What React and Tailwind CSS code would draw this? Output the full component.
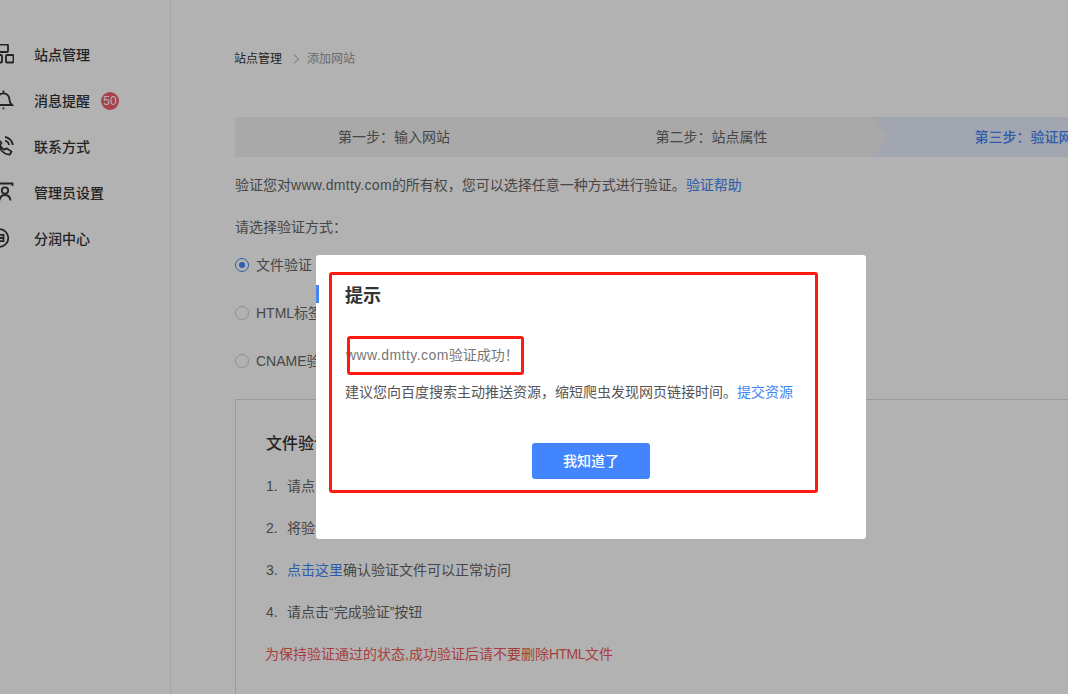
import React from 'react';

const fontStack = "font-['Liberation_Sans','Noto_Sans_CJK_SC',sans-serif]";

// Sidebar icons are cut off by the left edge of the window, as in the screenshot
const SiteIcon = () => (
  <svg viewBox="0 0 20 20" className="w-5 h-5 -translate-y-px" fill="none" stroke="#333" strokeWidth="1.8">
    <rect x="4.5" y="0.5" width="9.5" height="7.5" rx="1" />
    <rect x="-1" y="11" width="9" height="7.5" rx="1" />
    <rect x="12" y="11" width="7.5" height="7.5" rx="1" />
  </svg>
);

const BellIcon = () => (
  <svg viewBox="0 0 20 20" className="w-5 h-5 -translate-y-px" fill="none" stroke="#333" strokeWidth="1.8">
    <path d="M1 15h17c-1.600-1.400-2.600-2.600-2.600-5.500 0-3.400-2.400-6.200-5.900-6.200S3.600 6.100 3.600 9.500c0 2.900-1 4.100-2.600 5.500z" />
    <path d="M9.500 0.500v2.800M9.500 17.500v1.800" />
  </svg>
);

const PhoneIcon = () => (
  <svg viewBox="0 0 20 20" className="w-5 h-5 -translate-y-px" fill="none" stroke="#333" strokeWidth="1.8">
    <path d="M3.500 2.500 7.500 7 6 9c.8 2 2.500 3.800 4.500 4.800l2-1.500 5 3.200-1.500 3c-6 .4-13-6.500-12.500-15.500z" />
    <path d="M11 1c4 .5 7.300 3.800 7.800 8M11 4.800c2 .3 3.700 2 4 4.200" />
  </svg>
);

const AdminIcon = () => (
  <svg viewBox="0 0 20 20" className="w-5 h-5 -translate-y-px" fill="none" stroke="#333" strokeWidth="1.8">
    <path d="M1 1.500h17.500v2.500M1 1.500v3M1 9v3" />
    <circle cx="11" cy="8.500" r="3.200" />
    <path d="M5.500 18.500c.4-3.500 2.500-5.500 5.500-5.500s5.100 2 5.500 5.500" />
  </svg>
);

const ShareIcon = () => (
  <svg viewBox="0 0 20 20" className="w-5 h-5 -translate-y-px" fill="none" stroke="#333" strokeWidth="1.8">
    <circle cx="5.500" cy="10" r="8.800" />
    <path d="M1 6.800h8.500v6.400H1M1 10h8.500" />
  </svg>
);

const NavItem = ({ icon: Icon, label, badge }) => (
  <li className="flex items-center h-[46px] -ml-[6px] gap-5">
    <Icon />
    <span className="text-[14px] font-medium text-[#333]">{label}</span>
    {badge && (
      <span className="ml-[-9px] w-[18px] h-[18px] rounded-full bg-[#f05f69] text-white text-[12px] leading-[18px] text-center">
        {badge}
      </span>
    )}
  </li>
);

const Sidebar = () => (
  <aside className="w-[171px] shrink-0 border-r border-[#eeeeee] overflow-hidden pt-8">
    <ul>
      <NavItem icon={SiteIcon} label="站点管理" />
      <NavItem icon={BellIcon} label="消息提醒" badge="50" />
      <NavItem icon={PhoneIcon} label="联系方式" />
      <NavItem icon={AdminIcon} label="管理员设置" />
      <NavItem icon={ShareIcon} label="分润中心" />
    </ul>
  </aside>
);

const Radio = ({ checked, label }) => (
  <div className="flex items-center h-[48px] gap-[7px] text-[14px] text-[#666]">
    <span className={`w-[14px] h-[14px] rounded-full border flex items-center justify-center ${checked ? 'border-[#4285f4]' : 'border-[#d0d0d0]'}`}>
      {checked && <span className="w-[6px] h-[6px] rounded-full bg-[#4285f4]" />}
    </span>
    {label}
  </div>
);

const StepRow = () => (
  <div className="relative flex w-[960px] h-10 bg-[#f2f2f2] text-[14px] text-[#666] mt-[48px]">
    <div className="w-[318px] flex items-center justify-center">第一步：输入网站</div>
    <div className="w-[319px] flex items-center justify-center pr-[2px]">第二步：站点属性</div>
    <div className="w-[323px] flex items-center justify-center pr-[6px] font-medium text-[#4285f4] bg-[#e8eefc] [clip-path:polygon(0_0,100%_0,100%_100%,0_100%,16px_50%)]">
      第三步：验证网站
    </div>
    {/* faint chevron between the first two steps */}
    <svg className="absolute left-[318px] top-0 w-5 h-10" viewBox="0 0 20 40" fill="none" stroke="#f9f9f9" strokeWidth="1">
      <path d="M0 0l16 20L0 40" />
    </svg>
  </div>
);

const Steps = () => (
  <div className="text-[14px] text-[#666] leading-[20px] mt-[32px] pl-[30px] pr-10">
    <h3 className="text-[16px] font-medium text-[#333] leading-6">文件验证</h3>
    <ol className="mt-[9px]">
      <li className="h-[42px] flex items-center"><span className="w-[21px]">1.</span>请点击下载验证文件</li>
      <li className="h-[42px] flex items-center"><span className="w-[21px]">2.</span>将验证文件放置于您所配置域名的根目录下</li>
      <li className="h-[42px] flex items-center"><span className="w-[21px]">3.</span><span className="text-[#4285f4]">点击这里</span>确认验证文件可以正常访问</li>
      <li className="h-[42px] flex items-center"><span className="w-[21px]">4.</span>请点击“完成验证”按钮</li>
      <li className="h-[42px] flex items-center -ml-px text-[#f05a5a]">为保持验证通过的状态,成功验证后请不要删除<span className="tracking-[-0.5px]">HTML</span>文件</li>
    </ol>
  </div>
);

const Main = () => (
  <main className="flex-1 min-w-0 pl-16 pt-[49px] overflow-hidden">
    <div className="flex items-center h-[20px] text-[12px] text-[#333] -ml-px">
      站点管理
      <svg className="w-[7px] h-[10px] ml-[11px] mr-[7px]" viewBox="0 0 7 10" fill="none" stroke="#999" strokeWidth="1">
        <path d="M1 0.500 5.500 5 1 9.500" />
      </svg>
      <span className="text-[#999]">添加网站</span>
    </div>
    <StepRow />
    <p className="mt-[18px] text-[14px] leading-[20px] text-[#666]">
      验证您对<span className="tracking-[0.3px]">www.dmtty.com</span>的所有权，您可以选择任意一种方式进行验证。<span className="text-[#4285f4]">验证帮助</span>
    </p>
    <p className="mt-[22px] text-[14px] leading-[20px] text-[#666]">请选择验证方式：</p>
    <div className="mt-[4px]">
      <Radio checked label="文件验证" />
      <Radio label="HTML标签验证" />
      <Radio label="CNAME验证" />
    </div>
    <div className="w-[960px] h-[400px] mt-[14px] border border-[#dddddd]">
      <Steps />
    </div>
  </main>
);

const Dialog = () => (
  <div className="absolute left-[316px] top-[255px] w-[550px] h-[284px] bg-white rounded-[3px] pl-[30px] pt-[30px]">
    <span className="absolute left-0 top-[30px] w-[3px] h-[18px] bg-[#4285f4]" />
    <h2 className="text-[18px] font-bold leading-[22px] -ml-px text-[#333]">提示</h2>
    <p className="mt-[36px] text-[14px] leading-[24px] text-[#777]"><span className="tracking-[0.45px]">www.dmtty.com</span>验证成功！</p>
    <p className="mt-[13px] text-[14px] leading-[24px] -ml-px text-[#555]">
      建议您向百度搜索主动推送资源，缩短爬虫发现网页链接时间。<span className="text-[#4285f4]">提交资源</span>
    </p>
    <div className="flex justify-center mt-[39px] pr-[30px]">
      <button className="w-[118px] h-[36px] rounded-[3px] bg-[#4285ff] text-white text-[14px] font-medium">我知道了</button>
    </div>
    {/* red annotation frames drawn over the dialog */}
    <span className="absolute left-[13px] top-[17px] w-[489px] h-[221px] border-[3px] border-[#ff1a10] rounded-[3px]" />
    <span className="absolute left-[31px] top-[81px] w-[177px] h-[39px] border-[3px] border-[#ff1a10] rounded-[3px]" />
  </div>
);

const App = () => (
  <div className={`relative w-[1068px] h-[694px] overflow-hidden bg-white flex ${fontStack}`}>
    <Sidebar />
    <Main />
    <div className="absolute inset-0 bg-black/30" />
    <Dialog />
  </div>
);

export default App;
